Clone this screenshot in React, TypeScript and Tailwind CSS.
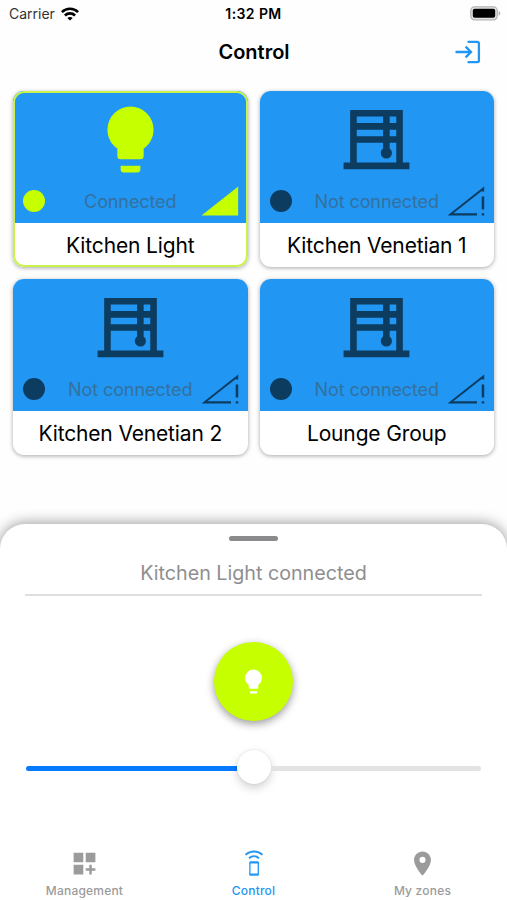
import React from 'react';
import { MdDashboardCustomize, MdLocationOn } from 'react-icons/md';

type DeviceKind = 'light' | 'blind';

interface Device {
    name: string;
    kind: DeviceKind;
    connected: boolean;
    selected?: boolean;
}

const devices: Device[] = [
    { name: 'Kitchen Light', kind: 'light', connected: true, selected: true },
    { name: 'Kitchen Venetian 1', kind: 'blind', connected: false },
    { name: 'Kitchen Venetian 2', kind: 'blind', connected: false },
    { name: 'Lounge Group', kind: 'blind', connected: false },
];

const BulbIcon = ({ className }: { className?: string }) => (
    <svg viewBox="0 0 24 24" fill="currentColor" className={className}>
        <path d="M12,2A7,7 0 0,0 5,9C5,11.38 6.19,13.47 8,14.74V17A1,1 0 0,0 9,18H15A1,1 0 0,0 16,17V14.74C17.81,13.47 19,11.38 19,9A7,7 0 0,0 12,2M9,21A1,1 0 0,0 10,22H14A1,1 0 0,0 15,21V20H9V21Z" />
    </svg>
);

const BlindIcon = ({ className }: { className?: string }) => (
    <svg viewBox="0 0 24 24" fill="currentColor" className={className}>
        <path fillRule="evenodd" d="M4 3H20V19H22V21H2V19H4ZM6 5V7H14V5ZM16 5V7H18V5ZM6 9V11H14V9ZM16 9V11H18V9ZM6 13V19H18V13H16V14.7A1.7 1.7 0 1 1 14 14.7V13Z" />
    </svg>
);

const SignalFullIcon = () => (
    <svg viewBox="0 0 38 30" className="h-[30px] w-[38px]" fill="currentColor">
        <path d="M0.5 29.5L37.2 0.5V29.5Z" />
    </svg>
);

const SignalAlertIcon = () => (
    <svg viewBox="0 0 38 30" className="h-[30px] w-[38px]" fill="currentColor">
        <path d="M0.5 29.5L37.2 0.5V5.5H34.7V4.9L6.4 27.2H30V29.5ZM34.7 10.5H37.2V23.5H34.7ZM34.7 27.2H37.2V29.5H34.7Z" />
    </svg>
);

const WifiIcon = () => (
    <svg viewBox="0 0 18 14" className="h-[14px] w-[18px]" fill="none" stroke="black" strokeWidth="2.6">
        <path d="M0.9 5.1C5.5 0.7 12.5 0.7 17.1 5.1" />
        <path d="M3.9 8.5C6.8 5.7 11.2 5.7 14.1 8.5" />
        <path d="M9 13.6L6.3 10.9C7.8 9.6 10.2 9.6 11.7 10.9Z" fill="black" stroke="none" />
    </svg>
);

const BatteryIcon = () => (
    <svg viewBox="0 0 31 15" className="h-[15px] w-[31px]">
        <rect x="0.8" y="0.8" width="26.4" height="13" rx="3.8" fill="#e6e6e6" stroke="#b4b4b4" strokeWidth="1.3" />
        <rect x="2.8" y="2.8" width="22.4" height="9" rx="1.8" fill="black" />
        <path d="M28.6 5V9.8C30.9 8.8 30.9 6 28.6 5Z" fill="#b4b4b4" />
    </svg>
);

const LoginIcon = () => (
    <svg viewBox="0 0 26 24" className="h-6 w-[26px]" fill="none" stroke="#2196f3" strokeWidth="2.3">
        <path d="M12.6 1.9H22.3A1.6 1.6 0 0 1 23.9 3.5V20.5A1.6 1.6 0 0 1 22.3 22.1H12.6" />
        <path d="M0.5 12H16M10.6 6.6L16 12L10.6 17.4" />
    </svg>
);

const RemoteIcon = () => (
    <svg viewBox="0 0 20 28" className="h-7 w-5" fill="none" stroke="currentColor" strokeWidth="2">
        <path d="M1.6 5.9C6.2 1.3 13.8 1.3 18.4 5.9" />
        <path d="M5 9.2C7.9 6.6 12.1 6.6 15 9.2" />
        <rect x="5.9" y="13.1" width="8.4" height="12.8" rx="1" strokeWidth="1.3" />
        <path d="M5.5 13.6H14.7M5.5 25.4H14.7" strokeWidth="2" />
    </svg>
);

const DeviceCard = ({ device }: { device: Device }) => {
    const tint = device.connected ? 'text-[#c6ff00]' : 'text-[#0d3c61]';
    return (
        <div className="relative h-[176px] overflow-hidden rounded-[11px] bg-white shadow-[0_1px_4px_rgba(0,0,0,0.35)]">
            <div className={`flex h-[132px] flex-col items-center justify-between bg-[#2196f3] ${tint}`}>
                {device.kind === 'light'
                    ? <BulbIcon className="mt-[9px] h-[79px] w-[79px] shrink-0" />
                    : <BlindIcon className="mt-[9px] h-[79px] w-[79px] shrink-0" />}
                <div className="grid h-[44px] w-full grid-cols-[50px_1fr_50px] items-center">
                    <span className="ml-[10px] h-[22px] w-[22px] rounded-full bg-current" />
                    <span className="text-center text-[18px] tracking-[-0.1px] whitespace-nowrap text-[#34719f]">
                        {device.connected ? 'Connected' : 'Not connected'}
                    </span>
                    <span className="justify-self-end pr-[9px]">
                        {device.connected ? <SignalFullIcon /> : <SignalAlertIcon />}
                    </span>
                </div>
            </div>
            <div className="flex h-[44px] items-center justify-center pt-px text-[21px] tracking-[-0.15px] whitespace-nowrap text-black">{device.name}</div>
            {device.selected && <div className="absolute inset-0 rounded-[11px] border-2 border-[#c9f24a]" />}
        </div>
    );
};

const App = () => {
    return (
        <div className="flex h-[900px] w-[507px] flex-col overflow-hidden bg-[#fefefe] font-['Inter','Liberation_Sans',sans-serif] text-black">
            <div className="grid h-[27px] shrink-0 grid-cols-3 items-center pr-[6px] pl-[9px]">
                <div className="flex items-center gap-[6px] text-[14px] text-[#333]">
                    <span>Carrier</span>
                    <WifiIcon />
                </div>
                <div className="-ml-[3px] text-center text-[14px] font-semibold tracking-[0.4px] whitespace-nowrap">1:32 PM</div>
                <div className="justify-self-end"><BatteryIcon /></div>
            </div>

            <header className="grid h-[49px] shrink-0 grid-cols-3 items-center px-[26px]">
                <h1 className="col-start-2 pl-px text-center text-[20px] font-semibold">Control</h1>
                <button className="justify-self-end"><LoginIcon /></button>
            </header>

            <main className="grid shrink-0 grid-cols-2 gap-3 px-[13px] pt-[15px]">
                {devices.map((device) => <DeviceCard key={device.name} device={device} />)}
            </main>

            <section className="mt-[69px] flex flex-1 flex-col rounded-t-[25px] bg-white px-[25px] shadow-[0_-1px_14px_rgba(0,0,0,0.4)]">
                <div className="mx-auto mt-3 h-[5px] w-[49px] rounded-full bg-[#8a8a8c]" />
                <div className="mt-2 flex h-[47px] items-center justify-center border-b-2 border-[#dedede] pt-[4px] text-[19.7px] text-[#8e8e90]">
                    Kitchen Light connected
                </div>

                <button className="mx-auto mt-[46px] flex h-[79px] w-[79px] shrink-0 items-center justify-center rounded-full bg-[#c6ff00] text-white shadow-[0_3px_8px_rgba(0,0,0,0.4)]">
                    <BulbIcon className="h-[29px] w-[29px]" />
                </button>

                <div className="mt-[29px] flex h-[34px] items-center px-px">
                    <div className="mt-[3px] h-[5px] flex-1 rounded-l-full bg-[#067aff]" />
                    <div className="h-[34px] w-[34px] rounded-full bg-white shadow-[0_4px_10px_rgba(0,0,0,0.18),0_0_2px_rgba(0,0,0,0.12)]" />
                    <div className="mt-[3px] h-[5px] flex-1 rounded-r-full bg-[#e3e3e3]" />
                </div>

                <nav className="-mx-[25px] mt-[63px] grid grid-cols-3 text-[12px] font-medium tracking-[0.2px] text-[#9b9b9b]">
                    <div className="flex flex-col items-center">
                        <div className="flex h-[32px] items-center"><MdDashboardCustomize size={29} /></div>
                        <span className="mt-[3px]">Management</span>
                    </div>
                    <div className="flex flex-col items-center text-[#2196f3]">
                        <div className="flex h-[32px] items-center"><RemoteIcon /></div>
                        <span className="mt-[3px]">Control</span>
                    </div>
                    <div className="flex flex-col items-center">
                        <div className="flex h-[32px] items-center"><MdLocationOn size={29} /></div>
                        <span className="mt-[3px]">My zones</span>
                    </div>
                </nav>
            </section>
        </div>
    );
};

export default App;
